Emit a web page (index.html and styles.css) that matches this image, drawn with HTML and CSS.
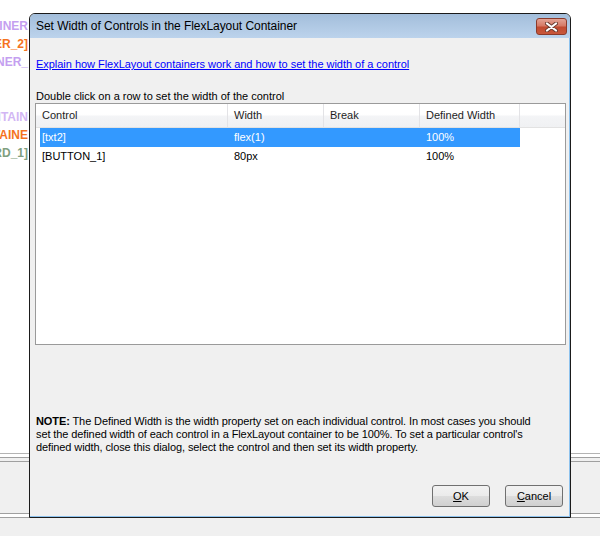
FILE: index.html
```html
<!DOCTYPE html>
<html>
<head>
<meta charset="utf-8">
<title>Set Width of Controls</title>
<link rel="stylesheet" href="styles.css">
</head>
<body>
<div class="desk">
  <div class="labels">
    <div class="lbl purple"><span>[CONTAINER</span></div>
    <div class="lbl orange"><span>[CONTAINER_2]</span></div>
    <div class="lbl purple"><span>[CONTAINER_</span></div>
    <div class="lbl gap purple light"><span>[FLEXCONTAIN</span></div>
    <div class="lbl orange"><span>[CONTAINE</span></div>
    <div class="lbl green"><span>[CARD_1]</span></div>
  </div>
</div>
<div class="sep-a"></div>
<div class="sep-b"></div>
<div class="fill"></div>
<div class="sep-c"></div>

<div class="dialog">
  <div class="titlebar">
    <span class="title">Set Width of Controls in the FlexLayout Container</span>
    <div class="close">
      <svg width="13" height="10" viewBox="0 0 13 10">
        <path d="M2 1.5 L11 8.5 M11 1.5 L2 8.5" stroke="#6b3b30" stroke-width="4" stroke-linecap="round" fill="none"/>
        <path d="M2 1.5 L11 8.5 M11 1.5 L2 8.5" stroke="#ffffff" stroke-width="2.2" stroke-linecap="round" fill="none"/>
      </svg>
    </div>
  </div>
  <div class="content">
    <a class="help" href="#">Explain how FlexLayout containers work and how to set the width of a control</a>
    <div class="hint">Double click on a row to set the width of the control</div>
    <div class="grid">
      <div class="head">
        <div class="hc c1">Control</div>
        <div class="hc c2">Width</div>
        <div class="hc c3">Break</div>
        <div class="hc c4">Defined Width</div>
        <div class="hc c5"></div>
      </div>
      <div class="row selected">
        <div class="cell c1">[txt2]</div>
        <div class="cell c2">flex(1)</div>
        <div class="cell c3"></div>
        <div class="cell c4">100%</div>
      </div>
      <div class="row">
        <div class="cell c1">[BUTTON_1]</div>
        <div class="cell c2">80px</div>
        <div class="cell c3"></div>
        <div class="cell c4">100%</div>
      </div>
    </div>
    <p class="note"><b>NOTE:</b> The Defined Width is the width property set on each individual control. In most cases you should<br>set the defined width of each control in a FlexLayout container to be 100%. To set a particular control's<br>defined width, close this dialog, select the control and then set its width property.</p>
    <div class="buttons">
      <button class="btn"><u>O</u>K</button>
      <button class="btn"><u>C</u>ancel</button>
    </div>
  </div>
</div>
</body>
</html>
```

FILE: styles.css
```css
html, body {
  margin: 0;
  padding: 0;
}
body {
  width: 600px;
  height: 536px;
  overflow: hidden;
  background: #f0f0f0;
  font-family: "Liberation Sans", Arial, sans-serif;
  font-size: 11px;
  color: #000;
  position: relative;
}

/* background application */
.desk {
  height: 453px;
  background: #ffffff;
}
.labels {
  width: 29px;
  overflow: hidden;
  padding-top: 17px;
  font-weight: bold;
  font-size: 12px;
}
.lbl {
  display: flex;
  justify-content: flex-end;
  height: 18px;
  line-height: 18px;
  white-space: nowrap;
  padding-right: 1px;
}
.lbl.gap { margin-top: 37px; }
.purple { color: #c49ff0; }
.purple.light { color: #d2b6f4; }
.orange { color: #f5731e; }
.green { color: #7fa07f; }

.sep-a {
  height: 3px;
  border-top: 1px solid #b4b4b4;
  background: #ffffff;
}
.sep-b {
  height: 3px;
  border-top: 1px solid #a0a0a0;
  border-bottom: 1px solid #a0a0a0;
  background: #f0f0f0;
}
.fill {
  height: 51px;
  background: #f0f0f0;
}
.sep-c {
  height: 3px;
  border-top: 1px solid #a0a0a0;
  border-bottom: 1px solid #a0a0a0;
  background: #ffffff;
}

/* dialog window */
.dialog {
  position: absolute;
  left: 29px;
  top: 13px;
  width: 542px;
  height: 505px;
  box-sizing: border-box;
  border: 1px solid #1b1b1b;
  border-radius: 6px 6px 0 0;
  background: #f0f0f0;
  display: flex;
  flex-direction: column;
}
.titlebar {
  height: 24px;
  flex: none;
  display: flex;
  align-items: center;
  padding-left: 6px;
  border-radius: 5px 5px 0 0;
  background: linear-gradient(#a3bedb, #bcd3ec);
}
.title {
  font-size: 12px;
  letter-spacing: -0.05px;
  color: #000;
}
.close {
  margin-left: auto;
  margin-right: 3px;
  align-self: flex-start;
  margin-top: 4px;
  width: 31px;
  height: 17px;
  box-sizing: border-box;
  border: 1px solid #8c3a2a;
  border-radius: 3px;
  background: linear-gradient(#e3a395 0%, #d67a66 45%, #c14a30 55%, #c8583c 100%);
  display: flex;
  align-items: center;
  justify-content: center;
}
.close svg { display: block; }

.content {
  flex: 1;
  display: flex;
  flex-direction: column;
  padding: 0 3px 0 5px;
  border-right: 1px solid #8fc3ee;
  border-bottom: 1px solid #8fc3ee;
}
.help {
  margin-top: 19px;
  margin-left: 1px;
  line-height: 14px;
  color: #0000ff;
  text-decoration: underline;
  align-self: flex-start;
  letter-spacing: -0.03px;
}
.hint {
  margin-top: 18px;
  margin-left: 1px;
  line-height: 14px;
}

.grid {
  height: 242px;
  box-sizing: border-box;
  border: 1px solid #9a9a9a;
  background: #ffffff;
  flex: none;
}
.head {
  display: flex;
  height: 23px;
  border-bottom: 1px solid #e2e2e2;
  background: linear-gradient(#ffffff 0%, #ffffff 45%, #f3f4f6 55%, #f0f1f3 100%);
}
.hc {
  box-sizing: border-box;
  border-right: 1px solid #e3e3e6;
  padding-left: 6px;
  line-height: 23px;
  color: #1e1e1e;
}
.hc.c1 { width: 192px; }
.hc.c2 { width: 96px; }
.hc.c3 { width: 96px; }
.hc.c4 { width: 100px; }
.hc.c5 { flex: 1; border-right: none; }

.row {
  display: flex;
  margin-left: 4px;
  height: 19px;
  line-height: 19px;
  width: 480px;
}
.row.selected {
  background: #3399ff;
  color: #ffffff;
}
.cell { box-sizing: border-box; padding-left: 6px; }
.cell.c1 { width: 188px; padding-left: 2px; }
.cell.c2 { width: 96px; }
.cell.c3 { width: 96px; }
.cell.c4 { width: 100px; }

.note {
  margin: 70px 0 0 1px;
  line-height: 13px;
  letter-spacing: -0.1px;
}
.note b { font-weight: bold; }

.buttons {
  margin-top: 31px;
  display: flex;
  justify-content: flex-end;
  gap: 15px;
  padding-right: 3px;
}
.btn {
  width: 58px;
  height: 22px;
  box-sizing: border-box;
  border: 1px solid #707070;
  border-radius: 3px;
  background: linear-gradient(#f2f2f2 0%, #ebebeb 48%, #dddddd 52%, #cfcfcf 100%);
  font-family: "Liberation Sans", Arial, sans-serif;
  font-size: 11px;
  color: #000;
  padding: 0;
}
.btn u { text-decoration: underline; }
```
